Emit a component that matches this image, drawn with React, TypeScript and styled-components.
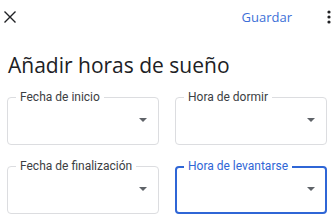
import React from "react";
import styled, { createGlobalStyle } from "styled-components";

const Global = createGlobalStyle`
  html, body { margin: 0; padding: 0; background: #fff; }
  body { font-family: Roboto, "Noto Sans", Arial, sans-serif; width: 336px; height: 219px; overflow: hidden; }
`;

const Page = styled.div`
  width: 336px;
  height: 219px;
  display: flex;
  flex-direction: column;
`;

const TopBar = styled.div`
  height: 33px;
  display: flex;
  align-items: center;
  padding: 0 5px 0 3px;
`;

const IconButton = styled.button<{ $w: number }>`
  border: 0;
  background: none;
  padding: 0;
  display: flex;
  align-items: center;
  justify-content: center;
  width: ${(p) => p.$w}px;
  height: 14px;
  cursor: pointer;
`;

const Spacer = styled.div`
  flex: 1;
`;

const SaveButton = styled.button`
  border: 0;
  background: none;
  padding: 0;
  margin-right: 35px;
  font-family: "Open Sans", Roboto, sans-serif;
  font-size: 13px;
  color: #3c6fd8;
`;

const Title = styled.h1`
  margin: 17px 0 0 8px;
  font-family: "Open Sans", Roboto, sans-serif;
  font-weight: 400;
  font-size: 21px;
  line-height: 30px;
  color: #202124;
`;

const Grid = styled.div`
  display: grid;
  grid-template-columns: 1fr 1fr;
  column-gap: 16px;
  row-gap: 21px;
  padding: 17px 9px 0 7px;
`;

const Field = styled.div<{ $focused?: boolean }>`
  height: 48px;
  box-sizing: border-box;
  border: ${(p) => (p.$focused ? "2px solid #2f66d6" : "1px solid #dcdde0")};
  border-radius: 4px;
  padding: 0 ${(p) => (p.$focused ? 10 : 11)}px 0 0;
  display: flex;
  align-items: center;
  justify-content: flex-end;
  position: relative;
`;

const Label = styled.span<{ $focused?: boolean }>`
  position: absolute;
  top: ${(p) => (p.$focused ? -8 : -7)}px;
  left: ${(p) => (p.$focused ? 7 : 8)}px;
  padding: 0 4px;
  background: #fff;
  font-family: Roboto, sans-serif;
  font-size: 12px;
  line-height: 12px;
  white-space: nowrap;
  color: ${(p) => (p.$focused ? "#2f66d6" : "#3c4043")};
`;

const Arrow = styled.span`
  width: 0;
  height: 0;
  border-left: 4px solid transparent;
  border-right: 4px solid transparent;
  border-top: 4px solid #5f6368;
  margin-top: -2px;
`;

const fields = [
  { label: "Fecha de inicio" },
  { label: "Hora de dormir" },
  { label: "Fecha de finalización" },
  { label: "Hora de levantarse", focused: true },
];

export default function App() {
  return (
    <Page>
      <Global />
      <TopBar>
        <IconButton $w={14} aria-label="Cerrar">
          <svg width="14" height="14" viewBox="0 0 14 14">
            <path d="M1.5 1.5 L12.5 12.5 M12.5 1.5 L1.5 12.5" stroke="#202124" strokeWidth="1.4" />
          </svg>
        </IconButton>
        <Spacer />
        <SaveButton>Guardar</SaveButton>
        <IconButton $w={4} aria-label="Más opciones">
          <svg width="4" height="14" viewBox="0 0 4 14">
            <circle cx="2" cy="2" r="1.6" fill="#202124" />
            <circle cx="2" cy="7" r="1.6" fill="#202124" />
            <circle cx="2" cy="12" r="1.6" fill="#202124" />
          </svg>
        </IconButton>
      </TopBar>
      <Title>Añadir horas de sueño</Title>
      <Grid>
        {fields.map((f) => (
          <Field key={f.label} $focused={f.focused}>
            <Label $focused={f.focused}>{f.label}</Label>
            <Arrow />
          </Field>
        ))}
      </Grid>
    </Page>
  );
}
